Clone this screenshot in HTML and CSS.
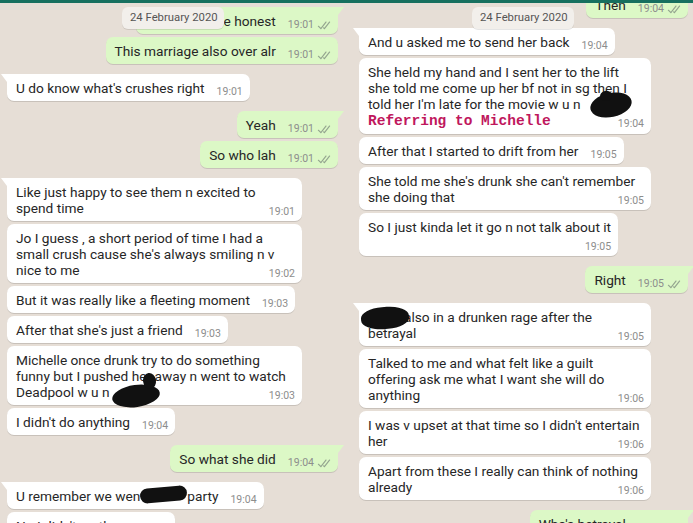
FILE: index.html
```html
<!DOCTYPE html>
<html lang="en">
<head>
<meta charset="utf-8">
<title>Chat</title>
<link rel="stylesheet" href="styles.css">
</head>
<body>
<svg class="defs" width="0" height="0" aria-hidden="true">
  <symbol id="dbl" viewBox="0 0 16 15">
    <path d="M15.01 3.316l-.478-.372a.365.365 0 0 0-.51.063L8.666 9.879a.32.32 0 0 1-.484.033l-.358-.325a.319.319 0 0 0-.484.032l-.378.483a.418.418 0 0 0 .036.541l1.32 1.266c.143.14.361.125.484-.033l6.272-8.048a.366.366 0 0 0-.064-.512zm-4.1 0l-.478-.372a.365.365 0 0 0-.51.063L4.566 9.879a.32.32 0 0 1-.484.033L1.891 7.769a.366.366 0 0 0-.515.006l-.423.433a.364.364 0 0 0 .006.514l3.258 3.185c.143.14.361.125.484-.033l6.272-8.048a.365.365 0 0 0-.063-.51z"/>
  </symbol>
</svg>
<div class="topbar"></div>
<main class="screens">
  <section class="chat chat-left">
    <div class="date-chip chip-left">24 February 2020</div>
    <div class="msg out first">Let me just be honest<span class="meta">19:01<svg class="ticks"><use href="#dbl"/></svg></span></div>
    <div class="msg out">This marriage also over alr<span class="meta">19:01<svg class="ticks"><use href="#dbl"/></svg></span></div>
    <div class="msg in first">U do know what's crushes right<span class="meta">19:01</span></div>
    <div class="msg out first">Yeah<span class="meta">19:01<svg class="ticks"><use href="#dbl"/></svg></span></div>
    <div class="msg out">So who lah<span class="meta">19:01<svg class="ticks"><use href="#dbl"/></svg></span></div>
    <div class="msg in first">Like just happy to see them n excited to spend time<span class="meta">19:01</span></div>
    <div class="msg in">Jo I guess , a short period of time I had a small crush cause she's always smiling n v nice to me<span class="meta">19:02</span></div>
    <div class="msg in">But it was really like a fleeting moment<span class="meta">19:03</span></div>
    <div class="msg in">After that she's just a friend<span class="meta">19:03</span></div>
    <div class="msg in">Michelle once drunk try to do something funny but I pushed her away n went to watch Deadpool w u n<span class="redact redact-deadpool"></span><span class="meta">19:03</span></div>
    <div class="msg in">I didn't do anything<span class="meta">19:04</span></div>
    <div class="msg out first">So what she did<span class="meta">19:04<svg class="ticks"><use href="#dbl"/></svg></span></div>
    <div class="msg in first">U remember we wen<span class="redact redact-party"></span>party<span class="meta">19:04</span></div>
    <div class="msg in">No I didn't go there<span class="meta">19:04</span></div>
  </section>

  <section class="chat chat-right">
    <div class="date-chip chip-right">24 February 2020</div>
    <div class="msg out first cut">Then<span class="meta">19:04<svg class="ticks"><use href="#dbl"/></svg></span></div>
    <div class="msg in first">And u asked me to send her back<span class="meta">19:04</span></div>
    <div class="msg in full">She held my hand and I sent her to the lift<br>she told me come up her bf not in sg then I<br>told her I'm late for the movie w u n<span class="redact redact-movie"></span><br><span class="note">Referring to Michelle</span><span class="meta">19:04</span></div>
    <div class="msg in">After that I started to drift from her<span class="meta">19:05</span></div>
    <div class="msg in">She told me she's drunk she can't remember she doing that<span class="meta">19:05</span></div>
    <div class="msg in stack">So I just kinda let it go n not talk about it<span class="meta">19:05</span></div>
    <div class="msg out first">Right<span class="meta">19:05<svg class="ticks"><use href="#dbl"/></svg></span></div>
    <div class="msg in first full"><span class="redact redact-name"></span>also in a drunken rage after the<br>betrayal<span class="meta">19:05</span></div>
    <div class="msg in">Talked to me and what felt like a guilt offering ask me what I want she will do anything<span class="meta">19:06</span></div>
    <div class="msg in">I was v upset at that time so I didn't entertain her<span class="meta">19:06</span></div>
    <div class="msg in">Apart from these I really can think of nothing already<span class="meta">19:06</span></div>
    <div class="msg out first">Who's betrayal<span class="meta">19:07<svg class="ticks"><use href="#dbl"/></svg></span></div>
  </section>
</main>
</body>
</html>
```
FILE: styles.css
```css
* { box-sizing: border-box; }

html, body {
  margin: 0;
  padding: 0;
}

body {
  width: 693px;
  height: 523px;
  overflow: hidden;
  background: #e6ded6;
  font-family: Roboto, "Noto Sans", "Liberation Sans", sans-serif;
  color: #262626;
}

.defs {
  position: absolute;
  width: 0;
  height: 0;
}

.topbar {
  height: 3px;
  background: #17705f;
}

.screens {
  display: grid;
  grid-template-columns: 346px 347px;
  height: 520px;
}

.chat {
  position: relative;
  display: flex;
  flex-direction: column;
  align-items: flex-start;
  gap: 3px;
  overflow: hidden;
}

.chat-left {
  padding: 4px 8px 0 7px;
}

.chat-right {
  padding: 0 5px 0 13px;
}

.date-chip {
  position: absolute;
  top: 4px;
  z-index: 3;
  height: 22px;
  padding: 0 6px 0 8px;
  border-radius: 6px;
  background: #f2efeb;
  color: #555;
  font-size: 11.3px;
  line-height: 22px;
  box-shadow: 0 1px 0.5px rgba(0, 0, 0, 0.1);
}

.chip-left { left: 122px; }
.chip-right { left: 126px; }

.msg {
  position: relative;
  flex-shrink: 0;
  display: flow-root;
  max-width: 295px;
  padding: 6px 7px 5px 9px;
  border-radius: 7px;
  background: #fff;
  font-size: 13.7px;
  line-height: 16px;
  box-shadow: 0 1px 0.5px rgba(0, 0, 0, 0.13);
}

.chat-right .msg { max-width: 292px; }
.chat-right .msg.full { width: 292px; }

.msg.out {
  align-self: flex-end;
  background: #dcf8c6;
}

.msg.first { margin-top: 7px; }
.chat-left .msg:nth-child(2) { margin-top: 0; }
.msg.cut { margin-top: -12px; }

.msg.in.first { border-top-left-radius: 0; }
.msg.out.first { border-top-right-radius: 0; }

.msg.in.first::before {
  content: "";
  position: absolute;
  top: 0;
  left: -6px;
  border-top: 8px solid #fff;
  border-left: 6px solid transparent;
}

.msg.out.first::before {
  content: "";
  position: absolute;
  top: 0;
  right: -6px;
  border-top: 8px solid #dcf8c6;
  border-right: 6px solid transparent;
}

.meta {
  float: right;
  position: relative;
  top: 4px;
  margin-left: 12px;
  display: flex;
  align-items: center;
  gap: 3px;
  font-size: 10.5px;
  line-height: 16px;
  color: #8d8d8d;
}

.msg.stack .meta {
  float: none;
  justify-content: flex-end;
  margin-left: 0;
}

.ticks {
  width: 14px;
  height: 13px;
  fill: #94a58f;
}

.note {
  font-family: "Liberation Mono", "DejaVu Sans Mono", monospace;
  font-size: 14.5px;
  font-weight: 700;
  color: #c0175d;
}

.redact {
  position: relative;
  display: inline-block;
  background: #111;
  border-radius: 50%;
  vertical-align: baseline;
}

.redact::after {
  content: "";
  position: absolute;
  background: #111;
  border-radius: 50%;
}

.redact-deadpool {
  width: 48px;
  height: 22px;
  margin: -12px 0 -10px 2px;
  transform: rotate(-8deg);
}
.redact-deadpool::after {
  top: -10px;
  right: 2px;
  width: 13px;
  height: 16px;
}

.redact-party {
  width: 47px;
  height: 15px;
  margin: -14px 0 -1px 0;
  border-radius: 8px;
  transform: rotate(-5deg);
}
.redact-party::after { display: none; }

.redact-movie {
  width: 42px;
  height: 24px;
  margin: -16px 0 -8px 10px;
  transform: rotate(-12deg);
}
.redact-movie::after {
  top: -3px;
  left: 12px;
  width: 12px;
  height: 10px;
}

.redact-name {
  width: 48px;
  height: 22px;
  margin: -15px -5px -7px -7px;
  border-radius: 45%;
  transform: rotate(-4deg);
}
.redact-name::after { display: none; }
```
